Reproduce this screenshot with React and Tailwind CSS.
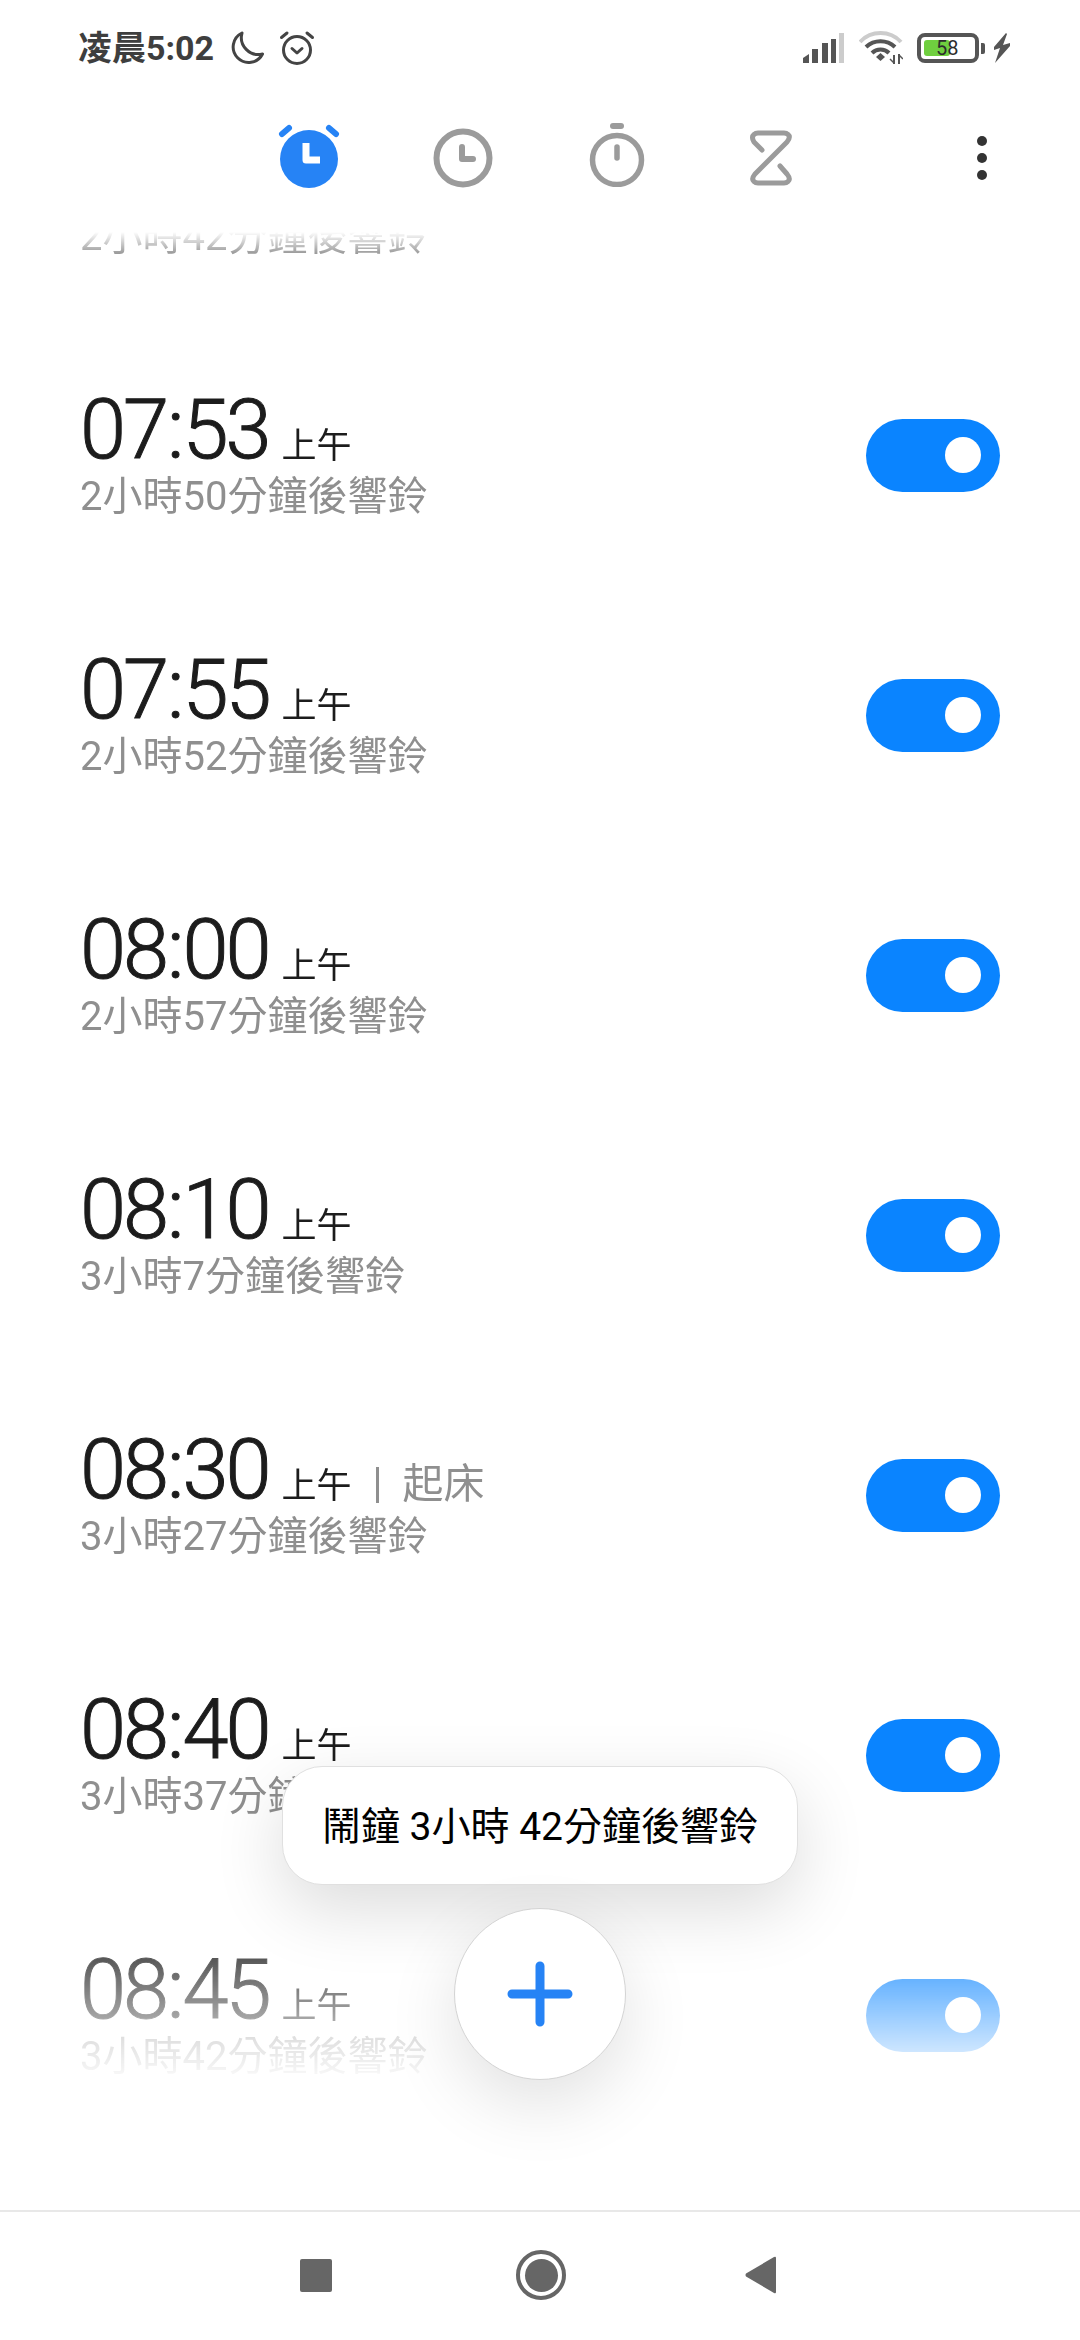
import React from 'react';

const alarms = [
  { time: '07:45', left: '2小時42分鐘後響鈴' },
  { time: '07:53', left: '2小時50分鐘後響鈴' },
  { time: '07:55', left: '2小時52分鐘後響鈴' },
  { time: '08:00', left: '2小時57分鐘後響鈴' },
  { time: '08:10', left: '3小時7分鐘後響鈴' },
  { time: '08:30', left: '3小時27分鐘後響鈴', label: '起床' },
  { time: '08:40', left: '3小時37分鐘後響鈴' },
  { time: '08:45', left: '3小時42分鐘後響鈴' },
];

function StatusLeft() {
  return (
    <div className="flex items-center">
      <span className="text-[34px] leading-[40px] font-bold text-[#3e3e3e] w-[136px] whitespace-nowrap">凌晨5:02</span>
      <svg className="ml-[16px]" width="34" height="34" viewBox="0 0 34 34" fill="none" stroke="#444" strokeWidth="3" strokeLinejoin="round">
        <path d="M12 2 A15.5 15.5 0 1 0 32.5 23 A17 17 0 0 1 12 2 Z" />
      </svg>
      <svg className="ml-[15px]" width="36" height="36" viewBox="0 0 36 36" fill="none" stroke="#444" strokeWidth="3" strokeLinecap="round" strokeLinejoin="round">
        <circle cx="18" cy="20" r="13.5" />
        <path d="M13 18.5 L18 23 L23 18.5" />
        <path d="M2.5 7.5 L8 3 M33.5 7.5 L28 3" />
      </svg>
    </div>
  );
}

function StatusRight() {
  return (
    <div className="flex items-center">
      <svg width="41" height="30" viewBox="0 0 41 30">
        <path d="M0 30 V25 L6 21 V30 Z" fill="#555" />
        <rect x="9" y="16" width="6" height="14" fill="#555" />
        <rect x="19" y="10" width="6" height="20" fill="#555" />
        <rect x="28" y="6" width="5" height="24" fill="#555" />
        <rect x="36" y="0" width="5" height="30" fill="#ccc" />
      </svg>
      <svg className="ml-[15px]" width="44" height="34" viewBox="0 0 44 34" fill="none" strokeLinecap="butt">
        <path d="M1 11 A28 28 0 0 1 42 11" stroke="#ccc" strokeWidth="4" />
        <path d="M7 16 A21 21 0 0 1 36 16" stroke="#555" strokeWidth="4" />
        <path d="M13 22 A12 12 0 0 1 30 22" stroke="#555" strokeWidth="4" />
        <path d="M17 26 L21.5 22 L26 26 L21.5 30 Z" fill="#555" />
        <path d="M35 24 V33 M40 33 V23" stroke="#555" strokeWidth="2" />
        <path d="M31 28 L35 32 M44 28 L40 24" stroke="#555" strokeWidth="1.5" />
      </svg>
      <div className="relative ml-[14px] w-[62px] h-[30px] rounded-[8px] border-[4px] border-[#555] bg-white">
        <div className="absolute left-[3px] top-[3px] w-[26px] h-[16px] rounded-[3px] bg-[#6fcf3f]" />
        <span className="absolute left-[15px] top-[-1px] text-[20px] leading-[24px] text-[#2c2c2c]">58</span>
      </div>
      <div className="ml-[2px] w-[4px] h-[11px] rounded-r-[2px] bg-[#555]" />
      <svg className="ml-[8px]" width="18" height="30" viewBox="0 0 18 30">
        <path d="M13 0 L1 14 L1 17 L7 15 L2 30 L17 13 L17 10 L10 12 L14 1 Z" fill="#555" />
      </svg>
    </div>
  );
}

function AlarmTab() {
  return (
    <svg width="66" height="66" viewBox="0 0 66 66">
      <circle cx="33" cy="37" r="29" fill="#2683f5" />
      <path d="M6 12 L13 6 M60 12 L53 6" stroke="#2683f5" strokeWidth="6" strokeLinecap="round" />
      <path d="M30 21 V38 H44" fill="none" stroke="#fff" strokeWidth="7" strokeLinejoin="round" />
    </svg>
  );
}

function ClockTab() {
  return (
    <svg width="60" height="60" viewBox="0 0 60 60" fill="none" stroke="#9b9b9b">
      <circle cx="30" cy="30" r="26.5" strokeWidth="6" />
      <path d="M29 19 V31 H40" strokeWidth="6" strokeLinecap="round" strokeLinejoin="round" />
    </svg>
  );
}

function StopwatchTab() {
  return (
    <svg width="56" height="64" viewBox="0 0 56 64" fill="none" stroke="#9b9b9b">
      <circle cx="28" cy="37" r="24.5" strokeWidth="5.5" />
      <path d="M24 3 H32" strokeWidth="6" strokeLinecap="round" />
      <path d="M28 24 V35" strokeWidth="5.5" strokeLinecap="round" />
    </svg>
  );
}

function TimerTab() {
  return (
    <svg width="44" height="56" viewBox="0 0 44 56" fill="none" stroke="#9b9b9b" strokeWidth="5" strokeLinecap="round" strokeLinejoin="round">
      <path d="M13 20 L5 12 Q2 7 5 4.5 Q6.5 3 9 3 H35 Q37.5 3 39 4.5 Q42 7 38 12 L6 44 Q2 49 5 51.5 Q6.5 53 9 53 H35 Q37.5 53 39 51.5 Q42 49 38 44 L31 36" />
    </svg>
  );
}

function TabBar() {
  return (
    <div className="flex items-center h-[124px] pl-[232px] pr-[93px]">
      <div className="w-[154px] flex justify-center -mt-[6px]"><AlarmTab /></div>
      <div className="w-[154px] flex justify-center"><ClockTab /></div>
      <div className="w-[154px] flex justify-center -mt-[6px]"><StopwatchTab /></div>
      <div className="w-[154px] flex justify-center"><TimerTab /></div>
      <div className="ml-auto flex flex-col gap-[7px]">
        <div className="w-[10px] h-[10px] rounded-full bg-[#333]" />
        <div className="w-[10px] h-[10px] rounded-full bg-[#333]" />
        <div className="w-[10px] h-[10px] rounded-full bg-[#333]" />
      </div>
    </div>
  );
}

function AlarmRow({ alarm }) {
  const [hh, mm] = alarm.time.split(':');
  return (
    <div className="h-[260px] flex items-center justify-between pl-[80px] pr-[80px]">
      <div>
        <div className="flex items-baseline h-[78px] whitespace-nowrap">
          <span className="text-[83px] leading-[78px] font-light tracking-[-3px] text-[#1c1c1c] [-webkit-text-stroke:1px_#1c1c1c] font-['Roboto']">
            {hh}<span className="mx-[1px]">:</span>{mm}
          </span>
          <span className="ml-[13px] text-[35px] text-[#1c1c1c]">上午</span>
          {alarm.label && <span className="ml-[24px] w-[3px] h-[36px] bg-[#8f8f8f] translate-y-[5px]" />}
          {alarm.label && <span className="ml-[24px] text-[41px] text-[#8f8f8f]">{alarm.label}</span>}
        </div>
        <div className="mt-[6px] text-[40px] leading-[44px] text-[#8f8f8f] whitespace-nowrap">{alarm.left}</div>
      </div>
      <div className="w-[134px] h-[73px] rounded-full bg-[#0a84ff] flex items-center justify-end pr-[19px]">
        <div className="w-[36px] h-[36px] rounded-full bg-white" />
      </div>
    </div>
  );
}

function NavBar() {
  return (
    <div className="h-[130px] border-t-2 border-[#e8e8e8] flex items-center pl-[300px] pb-[2px]">
      <div className="w-[32px] h-[33px] rounded-[2px] bg-[#666]" />
      <div className="ml-[184px] w-[50px] h-[50px] rounded-full border-[4px] border-[#666] flex items-center justify-center">
        <div className="w-[33px] h-[33px] rounded-full bg-[#666]" />
      </div>
      <svg className="ml-[179px]" width="32" height="38" viewBox="0 0 32 38">
        <path d="M31 2 V36 Q31 38 29 37 L1 20.5 Q0 19 1 17.5 L29 1 Q31 0 31 2 Z" fill="#666" />
      </svg>
    </div>
  );
}

export default function App() {
  return (
    <div className="relative w-[1080px] h-[2340px] bg-white overflow-hidden flex flex-col font-['Roboto','Noto_Sans_CJK_TC',sans-serif]">
      <div className="h-[96px] flex items-center justify-between pl-[78px] pr-[69px]">
        <StatusLeft />
        <StatusRight />
      </div>
      <TabBar />

      {/* list fades out at both ends */}
      <div className="h-[1990px] overflow-hidden [mask-image:linear-gradient(to_bottom,transparent_12px,black_36px,black_1693px,transparent_1867px)]">
        <div className="-mt-[155px]">
          {alarms.map(alarm => (
            <AlarmRow key={alarm.time} alarm={alarm} />
          ))}
        </div>
      </div>

      <NavBar />

      {/* toast and add button float over the list */}
      <div className="absolute left-0 right-0 top-[1766px] flex flex-col items-center gap-[23px]">
        <div className="w-[516px] h-[119px] pt-[4px] rounded-[40px] border border-[#e0e0e0] bg-white flex items-center justify-center text-[39px] text-black whitespace-nowrap shadow-[0_24px_70px_rgba(0,0,0,0.14)]">
          鬧鐘 3小時 42分鐘後響鈴
        </div>
        <div className="w-[172px] h-[172px] rounded-full border border-[#d4d4d4] bg-white flex items-center justify-center shadow-[0_24px_70px_rgba(0,0,0,0.12)]">
          <svg width="66" height="66" viewBox="0 0 66 66">
            <path d="M33 5 V61 M5 33 H61" stroke="#2683f5" strokeWidth="9" strokeLinecap="round" />
          </svg>
        </div>
      </div>
    </div>
  );
}
